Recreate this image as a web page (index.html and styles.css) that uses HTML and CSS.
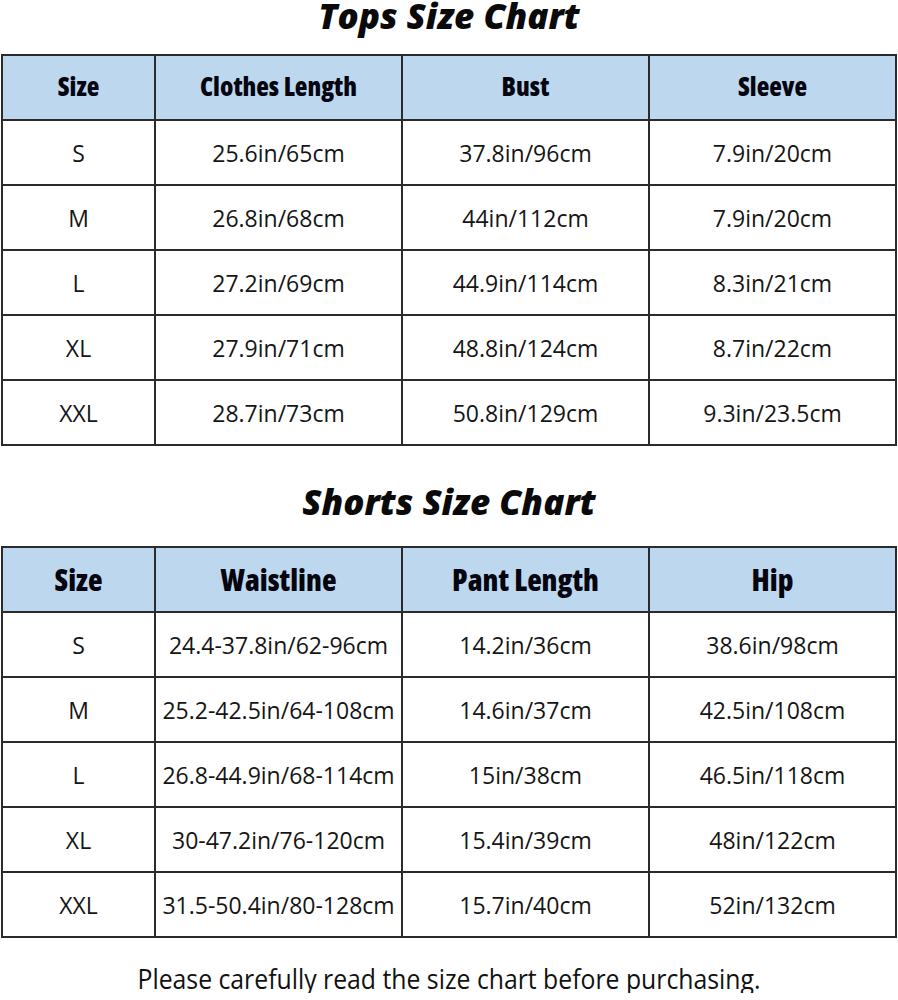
FILE: index.html
```html
<!DOCTYPE html>
<html>
<head>
<meta charset="utf-8">
<link rel="stylesheet" href="styles.css">
</head>
<body>
<h1 class="title">Tops Size Chart</h1>
<table class="chart">
  <colgroup><col class="c1"><col class="c2"><col class="c3"><col class="c4"></colgroup>
  <thead>
    <tr class="head"><th>Size</th><th>Clothes Length</th><th>Bust</th><th>Sleeve</th></tr>
  </thead>
  <tbody>
    <tr><td>S</td><td>25.6in/65cm</td><td>37.8in/96cm</td><td>7.9in/20cm</td></tr>
    <tr><td>M</td><td>26.8in/68cm</td><td>44in/112cm</td><td>7.9in/20cm</td></tr>
    <tr><td>L</td><td>27.2in/69cm</td><td>44.9in/114cm</td><td>8.3in/21cm</td></tr>
    <tr><td>XL</td><td>27.9in/71cm</td><td>48.8in/124cm</td><td>8.7in/22cm</td></tr>
    <tr><td>XXL</td><td>28.7in/73cm</td><td>50.8in/129cm</td><td>9.3in/23.5cm</td></tr>
  </tbody>
</table>
<h1 class="title title-2">Shorts Size Chart</h1>
<table class="chart shorts">
  <colgroup><col class="c1"><col class="c2"><col class="c3"><col class="c4"></colgroup>
  <thead>
    <tr class="head"><th>Size</th><th>Waistline</th><th>Pant Length</th><th>Hip</th></tr>
  </thead>
  <tbody>
    <tr><td>S</td><td>24.4-37.8in/62-96cm</td><td>14.2in/36cm</td><td>38.6in/98cm</td></tr>
    <tr><td>M</td><td>25.2-42.5in/64-108cm</td><td>14.6in/37cm</td><td>42.5in/108cm</td></tr>
    <tr><td>L</td><td>26.8-44.9in/68-114cm</td><td>15in/38cm</td><td>46.5in/118cm</td></tr>
    <tr><td>XL</td><td>30-47.2in/76-120cm</td><td>15.4in/39cm</td><td>48in/122cm</td></tr>
    <tr><td>XXL</td><td>31.5-50.4in/80-128cm</td><td>15.7in/40cm</td><td>52in/132cm</td></tr>
  </tbody>
</table>
<p class="note"><span class="note-text">Please carefully read the size chart before purchasing.</span></p>
</body>
</html>
```

FILE: styles.css
```css
html, body {
  margin: 0;
  padding: 0;
  background: #ffffff;
}
body {
  width: 898px;
  font-family: "Open Sans", "Noto Sans", sans-serif;
  color: #111111;
}
.title {
  margin: 0 0 22px 0;
  font-family: "Open Sans", "Noto Sans", sans-serif;
  font-style: italic;
  font-weight: 800;
  font-size: 35px;
  line-height: 32px;
  text-align: center;
  color: #0a0a0a;
}
.title-2 {
  margin-top: 40px;
  margin-bottom: 28px;
}
.chart {
  border-collapse: collapse;
  table-layout: fixed;
  width: 894px;
  margin-left: 1px;
}
.c1 { width: 153px; }
.c2 { width: 247px; }
.c3 { width: 247px; }
.c4 { width: 247px; }
.chart th, .chart td {
  border: 2px solid #2b2b2b;
  text-align: center;
  vertical-align: middle;
  padding: 0;
  height: 63px;
}
.chart th {
  background: #bdd7ee;
  font-family: "Open Sans", "Noto Sans", sans-serif;
  font-stretch: 75%;
  font-weight: 800;
  font-size: 26px;
  color: #05050f;
  padding-bottom: 3px;
  height: 60px;
}
.shorts th {
  font-size: 30px;
  padding-bottom: 0;
  height: 63px;
}
.chart td {
  font-family: "Open Sans", "Noto Sans", sans-serif;
  font-size: 23px;
  color: #151515;
}
.note {
  margin: 25px 0 0 0;
  text-align: center;
  font-family: "Open Sans", "Noto Sans", sans-serif;
  font-size: 28px;
  line-height: 30px;
  color: #111111;
}
.note-text {
  display: inline-block;
  transform: scaleX(0.885);
}
```
